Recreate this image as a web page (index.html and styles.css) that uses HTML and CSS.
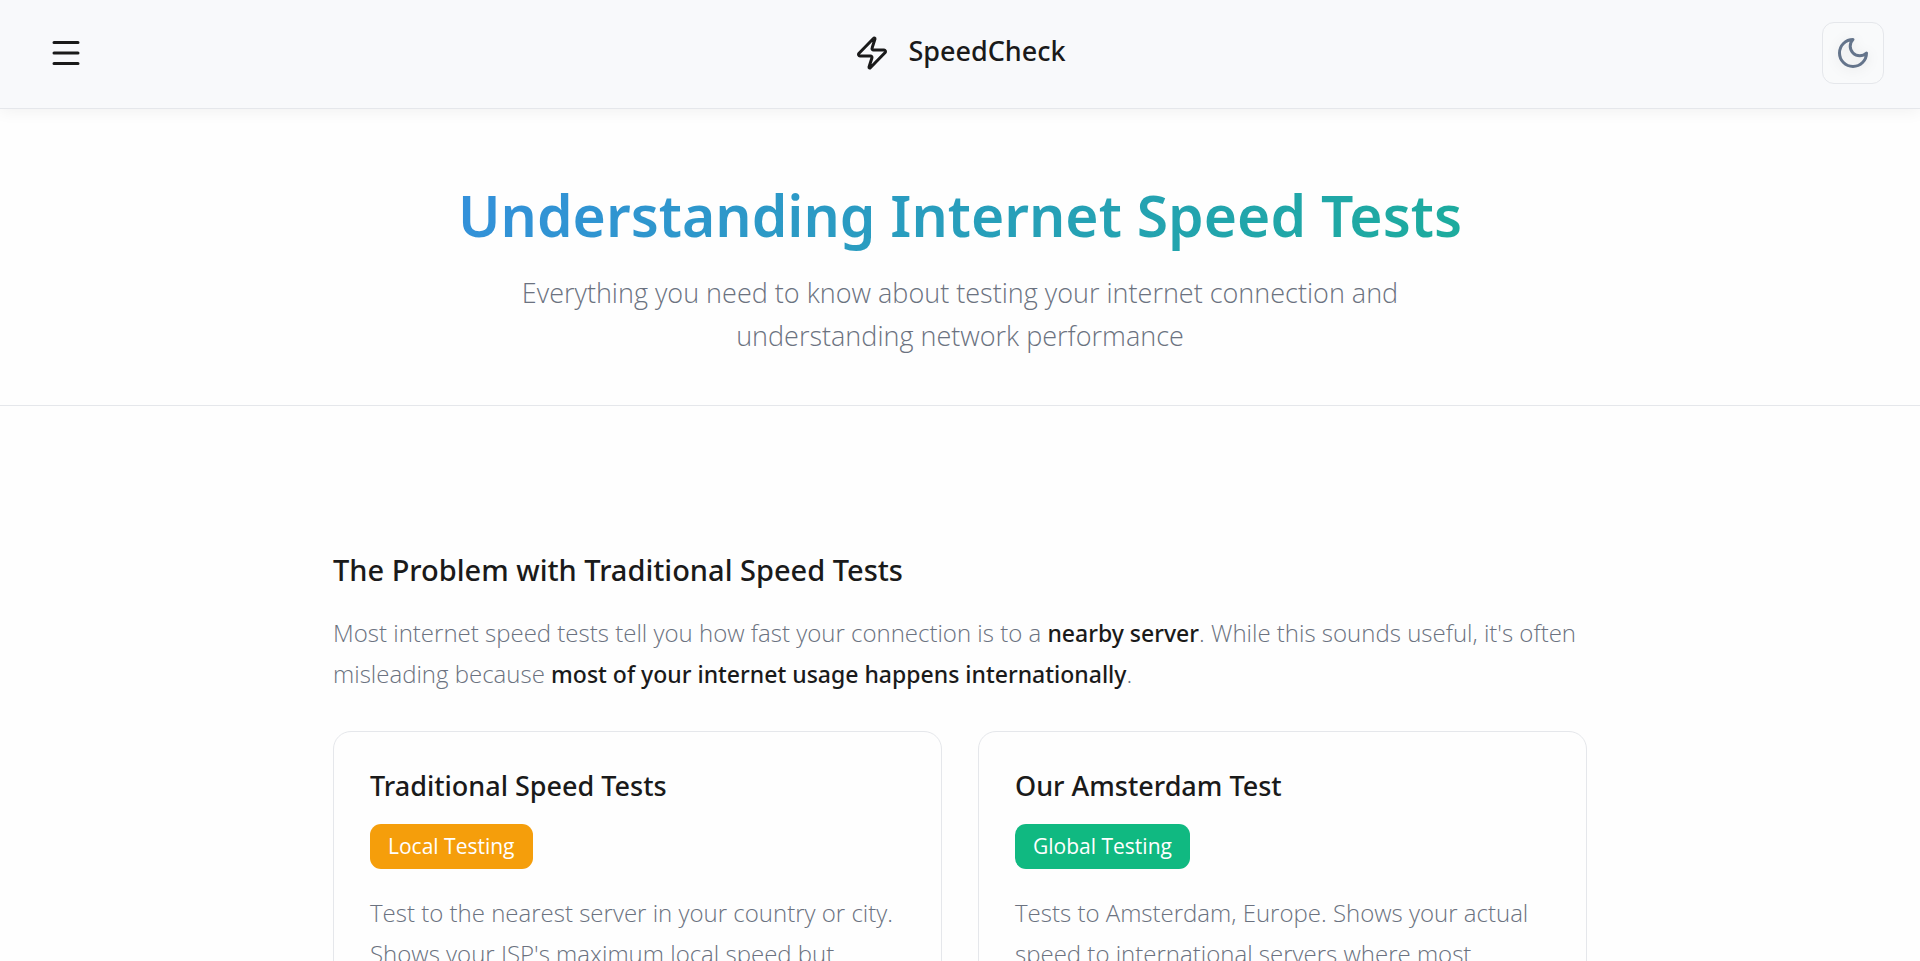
FILE: index.html
```html
<!DOCTYPE html>
<html lang="en">
<head>
<meta charset="utf-8">
<meta name="viewport" content="width=device-width, initial-scale=1">
<title>Understanding Internet Speed Tests - SpeedCheck</title>
<link rel="stylesheet" href="styles.css">
</head>
<body>
<header class="site-header">
  <button class="menu-button" type="button" aria-label="Open menu">
    <svg class="menu-icon" viewBox="0 0 36 36" aria-hidden="true"><path d="M6 7.500h24M6 18h24M6 28.500h24"/></svg>
  </button>
  <a class="brand" href="#">
    <svg class="brand-icon" viewBox="0 0 24 24" aria-hidden="true"><path d="M4 14a1 1 0 0 1-.78-1.630l9.900-10.200a.5.5 0 0 1 .86.460l-1.920 6.020A1 1 0 0 0 13 10h7a1 1 0 0 1 .78 1.630l-9.900 10.200a.5.5 0 0 1-.86-.460l1.920-6.020A1 1 0 0 0 11 14z"/></svg>
    <span class="brand-name">SpeedCheck</span>
  </a>
  <button class="theme-button" type="button" aria-label="Switch to dark theme">
    <svg class="theme-icon" viewBox="0 0 24 24" aria-hidden="true"><path d="M12 3a6 6 0 0 0 9 9 9 9 0 1 1-9-9Z"/></svg>
  </button>
</header>
<main>
  <section class="hero">
    <h1 class="hero-title">Understanding Internet Speed Tests</h1>
    <p class="hero-subtitle">Everything you need to know about testing your internet connection and understanding network performance</p>
  </section>
  <section class="content">
    <h2 class="section-title">The Problem with Traditional Speed Tests</h2>
    <p class="text">Most internet speed tests tell you how fast your connection is to a <strong>nearby server</strong>. While this sounds useful, it's often misleading because <strong>most of your internet usage happens internationally</strong>.</p>
    <div class="cards">
      <article class="card">
        <h3 class="card-title">Traditional Speed Tests</h3>
        <span class="badge badge-local">Local Testing</span>
        <p class="text">Test to the nearest server in your country or city. Shows your ISP's maximum local speed but</p>
      </article>
      <article class="card">
        <h3 class="card-title">Our Amsterdam Test</h3>
        <span class="badge badge-global">Global Testing</span>
        <p class="text">Tests to Amsterdam, Europe. Shows your actual speed to international servers where most</p>
      </article>
    </div>
  </section>
</main>
</body>
</html>
```
FILE: styles.css
```css
* {
  box-sizing: border-box;
  margin: 0;
}

html {
  height: 100%;
  overflow: hidden;
}

body {
  height: 100%;
  overflow: hidden;
  background: #fefefe;
  color: #1a1a1a;
  font-family: "Open Sans", "Noto Sans", sans-serif;
  font-weight: 300;
}

h1,
h2,
h3,
strong,
.brand {
  font-family: "Noto Sans", "Open Sans", sans-serif;
  font-weight: 500;
}

button {
  padding: 0;
  cursor: pointer;
}

svg {
  display: block;
  fill: none;
  stroke: currentColor;
  stroke-linecap: round;
  stroke-linejoin: round;
}

.site-header {
  display: grid;
  grid-template-columns: 1fr auto 1fr;
  align-items: center;
  padding: 22px 36px 24px;
  background: #f8f9fb;
  border-bottom: 1px solid #e5e7eb;
  box-shadow: 0 2px 16px rgba(0, 0, 0, 0.06);
}

.menu-button {
  justify-self: start;
  padding: 12px;
  border: 0;
  background: none;
  color: #1a1a1a;
}

.menu-icon {
  width: 36px;
  height: 36px;
  stroke-width: 3;
}

.brand {
  display: flex;
  align-items: center;
  gap: 18px;
  color: #1a1a1a;
  font-size: 27px;
  line-height: 40px;
  text-decoration: none;
}

.brand-name {
  padding-bottom: 4px;
}

.brand-icon {
  width: 36px;
  height: 36px;
  stroke-width: 2;
}

.theme-button {
  justify-self: end;
  padding: 12px;
  border: 1px solid #e5e7eb;
  border-radius: 12px;
  background: #f9fafb;
  color: #64748b;
}

.theme-icon {
  width: 36px;
  height: 36px;
  stroke-width: 2;
  filter: drop-shadow(0 2px 6px rgba(0, 0, 0, 0.1));
}

.hero {
  padding: 70px 36px 48px;
  border-bottom: 1px solid #e5e7eb;
  text-align: center;
}

.hero-title {
  width: fit-content;
  margin: 0 auto 20px;
  background: linear-gradient(135deg, #3490dc, #1cac9c);
  background-clip: text;
  color: transparent;
  font-size: 57px;
  font-weight: 600;
  line-height: 72px;
}

.hero-subtitle {
  max-width: 900px;
  margin: 0 auto;
  color: #6b7280;
  font-size: 27px;
  line-height: 43px;
}

.content {
  max-width: 1326px;
  margin: 0 auto;
  padding: 144px 36px;
}

.section-title {
  margin-bottom: 22px;
  font-size: 29px;
  line-height: 40px;
}

.text {
  color: #6b7280;
  font-size: 24px;
  line-height: 41px;
}

.text strong {
  color: #1a1a1a;
  font-size: 23px;
  line-height: 1;
}

.cards {
  display: grid;
  grid-template-columns: 1fr 1fr;
  gap: 36px;
  margin-top: 37px;
}

.card {
  padding: 36px;
  border: 1px solid #e5e7eb;
  border-radius: 18px;
}

.card-title {
  margin-bottom: 20px;
  font-size: 27px;
  line-height: 36px;
}

.badge {
  display: inline-block;
  margin-bottom: 23px;
  padding: 9px 18px;
  border-radius: 11px;
  color: #fff;
  font-size: 21px;
  font-weight: 400;
  line-height: 27px;
}

.badge-local {
  background: #f59e0b;
}

.badge-global {
  background: #10b981;
}
```
